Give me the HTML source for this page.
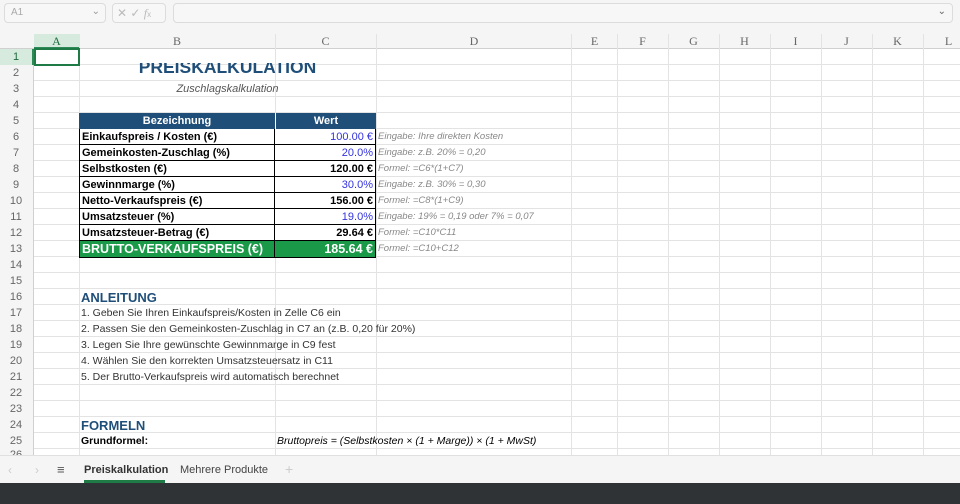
<!DOCTYPE html>
<html><head><meta charset="utf-8"><style>
*{margin:0;padding:0;box-sizing:border-box}
body{width:960px;height:504px;overflow:hidden;background:#fff;font-family:"Liberation Sans",sans-serif;position:relative}
.a{position:absolute}
.top{left:0;top:0;width:960px;height:34px;background:#f5f5f5}
.box{border:1px solid #dcdcdc;border-radius:4px;background:#f7f7f7;height:20px;top:3px}
.colh{top:34px;height:15px;background:#f5f5f5;left:0;width:960px;border-bottom:1px solid #d0d0d0}
.ch{position:absolute;top:34px;height:15px;font:12px "Liberation Serif",serif;color:#666;text-align:center;line-height:15px}
.rowh{left:0;top:49px;width:34px;height:406px;background:#f5f5f5;border-right:1px solid #d0d0d0}
.rn{position:absolute;left:0;width:32px;text-align:center;font:11px "Liberation Sans",sans-serif;color:#666;height:16px;line-height:16px}
.grid{left:34px;top:49px;width:926px;height:406px;background:repeating-linear-gradient(to bottom,transparent 0,transparent 15px,#e3e3e3 15px,#e3e3e3 16px)}
.vl{position:absolute;top:34px;width:1px;height:421px;background:#e3e3e3}
.cell{position:absolute;height:16px;line-height:16px;font-size:11px;white-space:nowrap}
.lb{left:79px;width:196px;padding-left:2px;font-weight:bold;color:#000;border:1px solid #000;border-top:none;background:#fff}
.vv{left:275px;width:101px;text-align:right;padding-right:2px;border:1px solid #000;border-top:none;border-left:none;background:#fff}
.bl{color:#3333dd}
.nt{left:378px;font-size:9.5px;font-style:italic;color:#888}
</style></head><body>
<div class="a top"></div>
<div class="a box" style="left:4px;width:102px"><span style="position:absolute;left:6px;top:3px;font-size:10px;color:#aaa">A1</span><span style="position:absolute;right:5px;top:2px;font-size:10px;color:#999">⌄</span></div>
<div class="a box" style="left:112px;width:54px"><span style="position:absolute;left:4px;top:2px;font-size:12px;color:#bbb">✕ ✓ <i style="font-family:'Liberation Serif'">f</i><span style="font-size:8px">x</span></span></div>
<div class="a box" style="left:173px;width:780px"><span style="position:absolute;right:6px;top:2px;font-size:10px;color:#666">⌄</span></div>
<div class="a colh"></div>
<div class="a" style="left:34px;top:34px;width:45px;height:15px;background:#d6ebdd;border-bottom:2px solid #2e8b57"></div>
<div class="ch" style="left:34px;width:45px;color:#1e6b3a">A</div>
<div class="ch" style="left:79px;width:196px">B</div>
<div class="ch" style="left:275px;width:101px">C</div>
<div class="ch" style="left:376px;width:196px">D</div>
<div class="ch" style="left:572px;width:45px">E</div>
<div class="ch" style="left:617px;width:51px">F</div>
<div class="ch" style="left:668px;width:51px">G</div>
<div class="ch" style="left:719px;width:51px">H</div>
<div class="ch" style="left:770px;width:51px">I</div>
<div class="ch" style="left:821px;width:51px">J</div>
<div class="ch" style="left:872px;width:51px">K</div>
<div class="ch" style="left:923px;width:51px">L</div>
<div class="a grid"></div>
<div class="vl" style="left:79px"></div><div class="vl" style="left:275px"></div><div class="vl" style="left:376px"></div><div class="vl" style="left:571px"></div><div class="vl" style="left:617px"></div><div class="vl" style="left:668px"></div><div class="vl" style="left:719px"></div><div class="vl" style="left:770px"></div><div class="vl" style="left:821px"></div><div class="vl" style="left:872px"></div><div class="vl" style="left:923px"></div>
<div class="a rowh"></div>
<div class="a" style="left:0;top:49px;width:34px;height:16px;background:#d6ebdd;border-right:2px solid #2e8b57"></div>
<div class="rn" style="top:49px;color:#1e6b3a">1</div><div class="rn" style="top:65px">2</div><div class="rn" style="top:81px">3</div><div class="rn" style="top:97px">4</div><div class="rn" style="top:113px">5</div><div class="rn" style="top:129px">6</div><div class="rn" style="top:145px">7</div><div class="rn" style="top:161px">8</div><div class="rn" style="top:177px">9</div><div class="rn" style="top:193px">10</div><div class="rn" style="top:209px">11</div><div class="rn" style="top:225px">12</div><div class="rn" style="top:241px">13</div><div class="rn" style="top:257px">14</div><div class="rn" style="top:273px">15</div><div class="rn" style="top:289px">16</div><div class="rn" style="top:305px">17</div><div class="rn" style="top:321px">18</div><div class="rn" style="top:337px">19</div><div class="rn" style="top:353px">20</div><div class="rn" style="top:369px">21</div><div class="rn" style="top:385px">22</div><div class="rn" style="top:401px">23</div><div class="rn" style="top:417px">24</div><div class="rn" style="top:433px">25</div><div class="rn" style="top:449px;height:6px;overflow:hidden;line-height:12px">26</div>
<div class="a" style="left:34px;top:48px;width:46px;height:18px;border:2px solid #1e7b45"></div>
<div class="a" style="left:79px;top:63px;width:297px;height:15px;overflow:hidden"><div style="position:absolute;top:-7px;width:297px;text-align:center;font-size:17.5px;line-height:22px;font-weight:bold;color:#1f4e79">PREISKALKULATION</div></div>
<div class="cell" style="left:79px;top:81px;width:297px;text-align:center;font-style:italic;color:#555">Zuschlagskalkulation</div>
<div class="cell" style="left:79px;top:113px;width:196px;background:#1f4e79;color:#fff;font-weight:bold;text-align:center">Bezeichnung</div>
<div class="cell" style="left:275px;top:113px;width:101px;background:#1f4e79;color:#fff;font-weight:bold;text-align:center;border-left:1px solid #fff">Wert</div>
<div class="cell lb" style="top:129px">Einkaufspreis / Kosten (€)</div><div class="cell vv bl" style="top:129px">100.00 €</div><div class="cell nt" style="top:129px">Eingabe: Ihre direkten Kosten</div>
<div class="cell lb" style="top:145px">Gemeinkosten-Zuschlag (%)</div><div class="cell vv bl" style="top:145px">20.0%</div><div class="cell nt" style="top:145px">Eingabe: z.B. 20% = 0,20</div>
<div class="cell lb" style="top:161px">Selbstkosten (€)</div><div class="cell vv" style="top:161px;font-weight:bold">120.00 €</div><div class="cell nt" style="top:161px">Formel: =C6*(1+C7)</div>
<div class="cell lb" style="top:177px">Gewinnmarge (%)</div><div class="cell vv bl" style="top:177px">30.0%</div><div class="cell nt" style="top:177px">Eingabe: z.B. 30% = 0,30</div>
<div class="cell lb" style="top:193px">Netto-Verkaufspreis (€)</div><div class="cell vv" style="top:193px;font-weight:bold">156.00 €</div><div class="cell nt" style="top:193px">Formel: =C8*(1+C9)</div>
<div class="cell lb" style="top:209px">Umsatzsteuer (%)</div><div class="cell vv bl" style="top:209px">19.0%</div><div class="cell nt" style="top:209px">Eingabe: 19% = 0,19 oder 7% = 0,07</div>
<div class="cell lb" style="top:225px">Umsatzsteuer-Betrag (€)</div><div class="cell vv" style="top:225px;font-weight:bold">29.64 €</div><div class="cell nt" style="top:225px">Formel: =C10*C11</div>
<div class="cell" style="left:79px;top:241px;width:196px;background:#1a9a48;color:#fff;font-weight:bold;font-size:12.5px;padding-left:2px;height:17px;border:1px solid #000;border-top:none">BRUTTO-VERKAUFSPREIS (€)</div>
<div class="cell" style="left:275px;top:241px;width:101px;background:#1a9a48;color:#fff;font-weight:bold;font-size:12.5px;text-align:right;padding-right:2px;height:17px;border:1px solid #000;border-top:none;border-left:none">185.64 €</div>
<div class="cell nt" style="top:241px">Formel: =C10+C12</div>
<div class="cell" style="left:81px;top:290px;font-size:13px;font-weight:bold;color:#1f4e79">ANLEITUNG</div>
<div class="cell" style="left:81px;top:305px;color:#333;font-size:10.5px">1. Geben Sie Ihren Einkaufspreis/Kosten in Zelle C6 ein</div>
<div class="cell" style="left:81px;top:321px;color:#333;font-size:10.5px">2. Passen Sie den Gemeinkosten-Zuschlag in C7 an (z.B. 0,20 für 20%)</div>
<div class="cell" style="left:81px;top:337px;color:#333;font-size:10.5px">3. Legen Sie Ihre gewünschte Gewinnmarge in C9 fest</div>
<div class="cell" style="left:81px;top:353px;color:#333;font-size:10.5px">4. Wählen Sie den korrekten Umsatzsteuersatz in C11</div>
<div class="cell" style="left:81px;top:369px;color:#333;font-size:10.5px">5. Der Brutto-Verkaufspreis wird automatisch berechnet</div>
<div class="cell" style="left:81px;top:418px;font-size:13px;font-weight:bold;color:#1f4e79">FORMELN</div>
<div class="cell" style="left:81px;top:433px;font-weight:bold;font-size:10.5px">Grundformel:</div>
<div class="cell" style="left:277px;top:433px;font-style:italic;font-size:10.5px">Bruttopreis = (Selbstkosten × (1 + Marge)) × (1 + MwSt)</div>
<div class="a" style="left:0;top:455px;width:960px;height:28px;background:#f5f5f5;border-top:1px solid #e0e0e0"></div>
<div class="cell" style="left:8px;top:462px;color:#ccc;font-size:12px">‹</div>
<div class="cell" style="left:35px;top:462px;color:#ccc;font-size:12px">›</div>
<div class="cell" style="left:57px;top:462px;color:#555;font-size:13px">≡</div>
<div class="cell" style="left:84px;top:462px;font-weight:bold;color:#333;font-size:11px">Preiskalkulation</div>
<div class="a" style="left:84px;top:480px;width:81px;height:3px;background:#1e7b45"></div>
<div class="cell" style="left:180px;top:462px;color:#444;font-size:11px">Mehrere Produkte</div>
<div class="cell" style="left:285px;top:461px;color:#ccc;font-size:14px">+</div>
<div class="a" style="left:0;top:483px;width:960px;height:21px;background:#303336"></div>
</body></html>
